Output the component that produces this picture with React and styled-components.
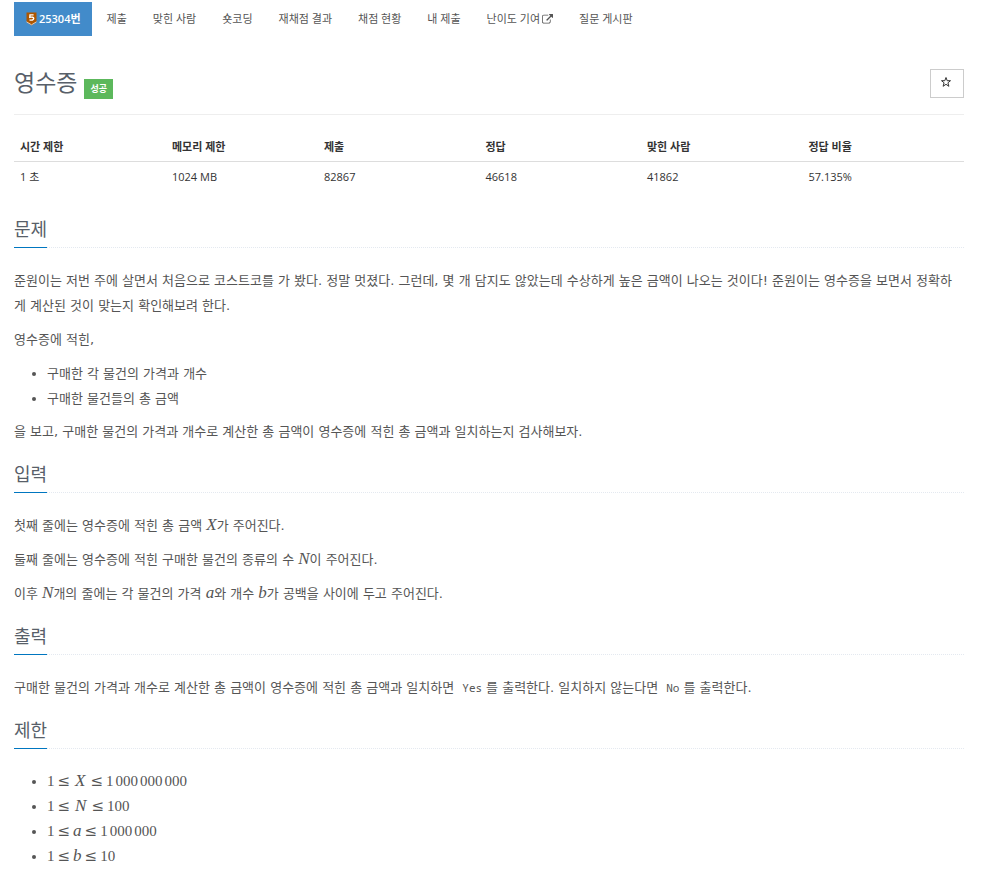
import styled, { createGlobalStyle } from "styled-components";

const color = {
  text: "#555",
  dark: "#333",
  line: "#eee",
  primary: "#428bca",
  accent: "#0076c0",
  success: "#5cb85c",
};

const GlobalStyle = createGlobalStyle`
  * {
    box-sizing: border-box;
  }

  body {
    margin: 0;
    background: #fff;
    color: ${color.dark};
    font-family: "Open Sans", "Noto Sans CJK KR", sans-serif;
    font-size: 11px;
    line-height: 18px;
  }
`;

const Page = styled.main`
  padding: 2px 43px 0 14px;
`;

const NavList = styled.ul`
  display: flex;
  margin: 0;
  padding: 0;
  list-style: none;
`;

const NavItem = styled.li`
  &:first-child {
    margin-right: 2px;
  }
`;

const NavLink = styled.a`
  display: flex;
  align-items: center;
  gap: 2px;
  padding: 8px ${({ $active }) => ($active ? "11px 8px 12px" : "13px")};
  background: ${({ $active }) => ($active ? color.primary : "transparent")};
  color: ${({ $active }) => ($active ? "#fff" : color.text)};
  font-weight: ${({ $active }) => ($active ? 600 : 400)};
  text-decoration: none;
  white-space: nowrap;
`;

const Header = styled.header`
  display: flex;
  justify-content: space-between;
  align-items: center;
  height: 61px;
  margin-top: 18px;
  padding-bottom: 1px;
  border-bottom: 1px solid ${color.line};
`;

const TitleWrapper = styled.div`
  display: flex;
  align-items: flex-end;
  gap: 7px;
  padding-bottom: 4px;
`;

const Title = styled.h1`
  margin: 0;
  color: #585f69;
  font-size: 23px;
  font-weight: 400;
  line-height: 34px;
`;

const Badge = styled.span`
  padding: 0 6px;
  background: ${color.success};
  color: #fff;
  font-size: 9px;
  font-weight: 700;
  line-height: 20px;
`;

const StarButton = styled.button`
  display: flex;
  align-items: center;
  justify-content: center;
  width: 34px;
  height: 29px;
  padding: 0 2px 3px 0;
  border: 1px solid #ccc;
  background: #fff;
  color: ${color.dark};
`;

const Table = styled.table`
  width: 100%;
  margin-top: 18px;
  border-collapse: collapse;
  table-layout: fixed;
`;

const HeadCell = styled.th`
  width: ${({ $width }) => $width};
  padding: 5px 6px;
  border-bottom: 1px solid #ddd;
  font-weight: 700;
  text-align: left;
`;

const Cell = styled.td`
  padding: 6px;
`;

const SectionHead = styled.div`
  display: flex;
  margin: ${({ $first }) => ($first ? "23px" : "16px")} 0 20px;
  border-bottom: 1px dotted #e4e9f0;
`;

const SectionTitle = styled.h2`
  margin: 0 0 -1px;
  padding-bottom: 4px;
  border-bottom: 1px solid ${color.accent};
  color: #585f69;
  font-size: 18px;
  font-weight: 400;
  line-height: 28px;
`;

const Paragraph = styled.p`
  margin: 0 0 9px;
  padding-right: 4px;
  color: ${color.text};
  font-family: "DejaVu Sans", "Noto Sans CJK KR", sans-serif;
  font-size: 13px;
  line-height: 25px;
  word-break: break-all;
`;

const List = styled.ul`
  margin: 0 0 8px;
  padding-left: 33px;
  color: ${color.text};
  font-family: "DejaVu Sans", "Noto Sans CJK KR", sans-serif;
  font-size: 13px;
  line-height: 25px;
`;

const Code = styled.code`
  padding: 0 4px;
  font-family: "Noto Sans Mono", "DejaVu Sans Mono", monospace;
  font-size: 11px;
`;

const Formula = styled.span`
  font-family: "Liberation Serif", serif;
  font-size: 15px;
  line-height: 16px;
`;

const Variable = styled.i`
  padding: 0 ${({ $wide }) => ($wide ? "2px" : "0")};
  font-family: "Liberation Serif", serif;
  font-size: 17px;
  line-height: 16px;
`;

const Relation = styled.span`
  margin: 0 3px;
  font-family: "DejaVu Serif", serif;
`;

const Digits = styled.span`
  & + & {
    margin-left: 2px;
  }
`;

const navItems = [
  { text: "제출" },
  { text: "맞힌 사람" },
  { text: "숏코딩" },
  { text: "재채점 결과" },
  { text: "채점 현황" },
  { text: "내 제출" },
  { text: "난이도 기여", external: true },
  { text: "질문 게시판" },
];

const stats = [
  { label: "시간 제한", value: "1 초", width: "16%" },
  { label: "메모리 제한", value: "1024 MB", width: "16%" },
  { label: "제출", value: "82867", width: "17%" },
  { label: "정답", value: "46618", width: "17%" },
  { label: "맞힌 사람", value: "41862", width: "17%" },
  { label: "정답 비율", value: "57.135%", width: "17%" },
];

const limits = [
  { name: "X", max: ["1", "000", "000", "000"], wide: true },
  { name: "N", max: ["100"], wide: true },
  { name: "a", max: ["1", "000", "000"] },
  { name: "b", max: ["10"] },
];

function TierIcon() {
  return (
    <svg width="11" height="14" viewBox="0 0 11 14" aria-hidden="true">
      <path d="M0.5 0.5h10v9.500l-5 3.500-5-3.500z" fill="#ad5600" />
      <path d="M0.5 9.800l5 3 5-3" fill="none" stroke="#fff" strokeWidth="0.700" />
      <path
        d="M7.600 2.900H4l-.2 2.400c2.600-.5 3.900 0 3.900 1.300 0 1.400-2 1.900-4.200 1.200"
        fill="none"
        stroke="#fff"
        strokeWidth="1.400"
      />
    </svg>
  );
}

function ExternalIcon() {
  return (
    <svg width="11" height="11" viewBox="0 0 1792 1792" fill="currentColor" aria-hidden="true">
      <path d="M1408 928v320q0 119-84.5 203.5t-203.5 84.5h-832q-119 0-203.5-84.5t-84.5-203.5v-832q0-119 84.5-203.5t203.5-84.5h704q14 0 23 9t9 23v64q0 14-9 23t-23 9h-704q-66 0-113 47t-47 113v832q0 66 47 113t113 47h832q66 0 113-47t47-113v-320q0-14 9-23t23-9h64q14 0 23 9t9 23zm384-864v512q0 26-19 45t-45 19-45-19l-176-176-652 652q-10 10-23 10t-23-10l-114-114q-10-10-10-23t10-23l652-652-176-176q-19-19-19-45t19-45 45-19h512q26 0 45 19t19 45z" />
    </svg>
  );
}

function StarIcon() {
  return (
    <svg width="12" height="12" viewBox="0 0 12 12" aria-hidden="true">
      <path
        d="M6 1.500l1.200 3.200h3.300L7.900 6.800l1 3.500L6 8.300l-2.900 2 1-3.500-2.600-2.100h3.300z"
        fill="none"
        stroke="currentColor"
        strokeWidth="1"
      />
    </svg>
  );
}

function Nav() {
  return (
    <nav>
      <NavList>
        <NavItem>
          <NavLink href="#problem" $active>
            <TierIcon />
            25304번
          </NavLink>
        </NavItem>
        {navItems.map(({ text, external }) => (
          <NavItem key={text}>
            <NavLink href="#">
              {text}
              {external && <ExternalIcon />}
            </NavLink>
          </NavItem>
        ))}
      </NavList>
    </nav>
  );
}

function StatsTable() {
  return (
    <Table>
      <thead>
        <tr>
          {stats.map(({ label, width }) => (
            <HeadCell key={label} scope="col" $width={width}>{label}</HeadCell>
          ))}
        </tr>
      </thead>
      <tbody>
        <tr>
          {stats.map(({ label, value }) => (
            <Cell key={label}>{value}</Cell>
          ))}
        </tr>
      </tbody>
    </Table>
  );
}

function Section({ title, first, children }) {
  return (
    <section>
      <SectionHead $first={first}>
        <SectionTitle>{title}</SectionTitle>
      </SectionHead>
      {children}
    </section>
  );
}

function Limit({ name, max, wide }) {
  return (
    <Formula>
      1<Relation>≤</Relation><Variable $wide={wide}>{name}</Variable><Relation>≤</Relation>
      {max.map((group, index) => (
        <Digits key={index}>{group}</Digits>
      ))}
    </Formula>
  );
}

function App() {
  return (
    <Page>
      <GlobalStyle />
      <Nav />
      <Header>
        <TitleWrapper>
          <Title>영수증</Title>
          <Badge>성공</Badge>
        </TitleWrapper>
        <StarButton type="button" aria-label="즐겨찾기">
          <StarIcon />
        </StarButton>
      </Header>
      <StatsTable />
      <Section title="문제" first>
        <Paragraph>
          준원이는 저번 주에 살면서 처음으로 코스트코를 가 봤다. 정말 멋졌다. 그런데, 몇 개 담지도 않았는데 수상하게 높은 금액이 나오는 것이다! 준원이는 영수증을 보면서 정확하게 계산된 것이 맞는지 확인해보려 한다.
        </Paragraph>
        <Paragraph>영수증에 적힌,</Paragraph>
        <List>
          <li>구매한 각 물건의 가격과 개수</li>
          <li>구매한 물건들의 총 금액</li>
        </List>
        <Paragraph>
          을 보고, 구매한 물건의 가격과 개수로 계산한 총 금액이 영수증에 적힌 총 금액과 일치하는지 검사해보자.
        </Paragraph>
      </Section>
      <Section title="입력">
        <Paragraph>첫째 줄에는 영수증에 적힌 총 금액 <Variable>X</Variable>가 주어진다.</Paragraph>
        <Paragraph>둘째 줄에는 영수증에 적힌 구매한 물건의 종류의 수 <Variable>N</Variable>이 주어진다.</Paragraph>
        <Paragraph>
          이후 <Variable>N</Variable>개의 줄에는 각 물건의 가격 <Variable>a</Variable>와 개수 <Variable>b</Variable>가 공백을 사이에 두고 주어진다.
        </Paragraph>
      </Section>
      <Section title="출력">
        <Paragraph>
          구매한 물건의 가격과 개수로 계산한 총 금액이 영수증에 적힌 총 금액과 일치하면 <Code>Yes</Code>를 출력한다. 일치하지 않는다면 <Code>No</Code>를 출력한다.
        </Paragraph>
      </Section>
      <Section title="제한">
        <List>
          {limits.map(({ name, max, wide }) => (
            <li key={name}>
              <Limit name={name} max={max} wide={wide} />
            </li>
          ))}
        </List>
      </Section>
    </Page>
  );
}

export default App;
